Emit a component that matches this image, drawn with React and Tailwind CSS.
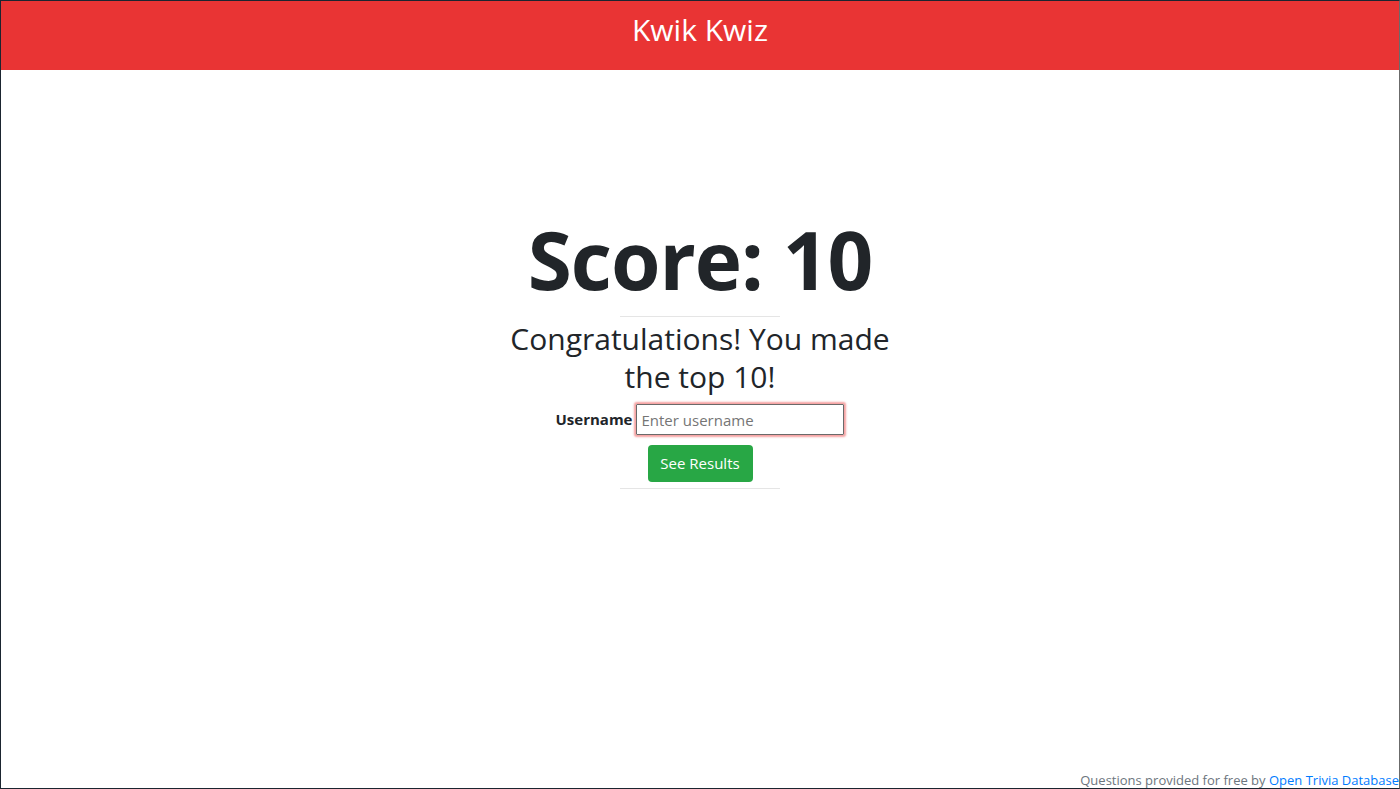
export default function App() {
  return (
    <div className="h-[789px] flex flex-col bg-white border border-[#1b2530] border-r-[#6b6b6b] overflow-hidden text-[#212529]" style={{ fontFamily: '"Open Sans", "Noto Sans", sans-serif' }}>
      <header className="h-[69px] shrink-0 bg-[#e93434] flex items-center justify-center">
        <h1 className="text-white text-[30px] leading-none font-normal -mt-[12px]">Kwik Kwiz</h1>
      </header>
      <main className="flex-1 flex flex-col items-center pt-[141px]">
        <div className="text-[80px] font-bold leading-[96px] tracking-[-1px]">Score: 10</div>
        <hr className="w-[160px] border-t border-[#e5e5e5] mt-[9px]" />
        <h2 className="w-[400px] text-center text-[30px] leading-[38px] font-normal mt-[3px]">Congratulations! You made the top 10!</h2>
        <div className="flex items-center gap-[4px] mt-[8px]">
          <label className="text-[15px] font-bold">Username</label>
          <input
            placeholder="Enter username"
            className="w-[208px] h-[31px] px-[4px] text-[15px] border border-[#6a6a6a] rounded-[1px] shadow-[0_0_2px_2px_rgba(240,110,110,0.65)] outline-none placeholder:text-[#757575]"
          />
        </div>
        <button className="mt-[10px] h-[37px] w-[105px] rounded-[4px] bg-[#28a745] text-white text-[15px]">See Results</button>
        <hr className="w-[160px] border-t border-[#e5e5e5] mt-[6px]" />
      </main>
      <footer className="text-right text-[13px] leading-[16px] text-[#6c757d]">
        Questions provided for free by <a className="text-[#007bff]">Open Trivia Database</a>
      </footer>
    </div>
  );
}
